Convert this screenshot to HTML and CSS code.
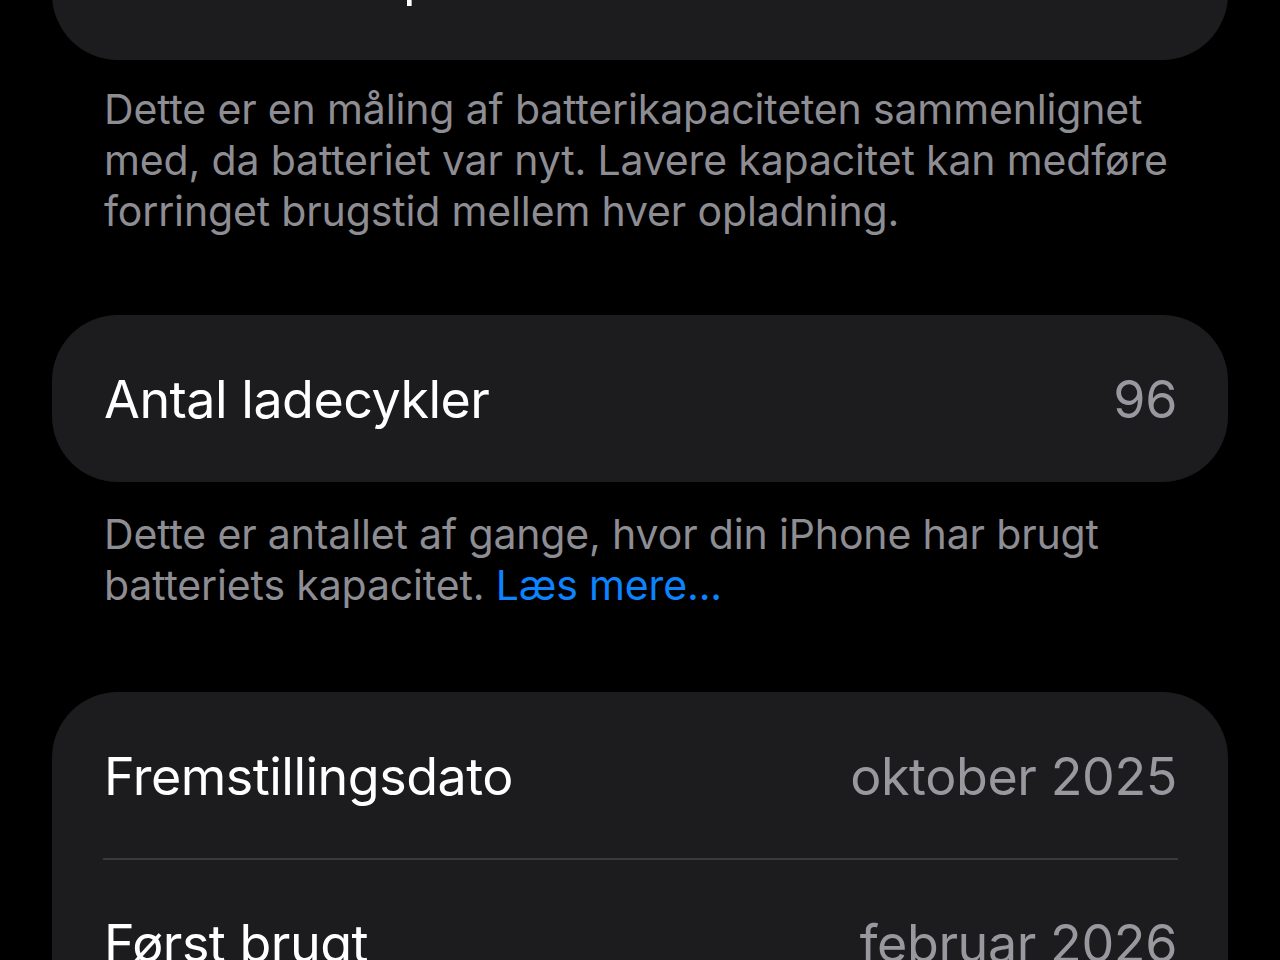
FILE: index.html
```html
<!DOCTYPE html>
<html lang="da">
<head>
<meta charset="utf-8">
<title>Batteritilstand</title>
<link rel="stylesheet" href="styles.css">
</head>
<body>
<main class="page">
  <section class="card card--first">
    <div class="row">
      <span class="label">Maksimal kapacitet</span>
      <span class="value">100 %</span>
    </div>
  </section>
  <p class="footer footer--first">Dette er en måling af batterikapaciteten sammenlignet med, da batteriet var nyt. Lavere kapacitet kan medføre forringet brugstid mellem hver opladning.</p>

  <section class="card">
    <div class="row">
      <span class="label">Antal ladecykler</span>
      <span class="value">96</span>
    </div>
  </section>
  <p class="footer footer--second">Dette er antallet af gange, hvor din iPhone har brugt batteriets kapacitet. <a class="link" href="#">Læs mere...</a></p>

  <section class="card">
    <div class="row">
      <span class="label">Fremstillingsdato</span>
      <span class="value">oktober 2025</span>
    </div>
    <div class="separator"></div>
    <div class="row">
      <span class="label">Først brugt</span>
      <span class="value">februar 2026</span>
    </div>
  </section>
</main>
</body>
</html>
```

FILE: styles.css
```css
html, body {
  margin: 0;
  padding: 0;
  background: #000;
  height: 100%;
  overflow: hidden;
}

.page {
  font-family: Inter, "Noto Sans", "Liberation Sans", sans-serif;
  display: flex;
  flex-direction: column;
}

.card {
  background: #1c1c1e;
  border-radius: 66px;
  margin: 0 52px;
  overflow: hidden;
}

.card--first {
  margin-top: -107px;
}

.row {
  height: 167px;
  box-sizing: border-box;
  padding: 2px 51px 0 52px;
  display: flex;
  align-items: center;
  justify-content: space-between;
}

.label {
  font-size: 52px;
  color: #ffffff;
  letter-spacing: -0.5px;
}

.value {
  font-size: 52px;
  color: #98989e;
  letter-spacing: -0.4px;
}

.separator {
  height: 2px;
  background: #3a3a3d;
  margin: -1px 50px -1px 51px;
  position: relative;
}

.footer {
  margin: 0;
  padding: 24px 100px 78px 104px;
  font-size: 41px;
  line-height: 51px;
  letter-spacing: -0.15px;
  color: #8d8d93;
}

.footer--second {
  padding-top: 27px;
  padding-bottom: 81px;
}

.link {
  color: #0a84ff;
  text-decoration: none;
}
```
